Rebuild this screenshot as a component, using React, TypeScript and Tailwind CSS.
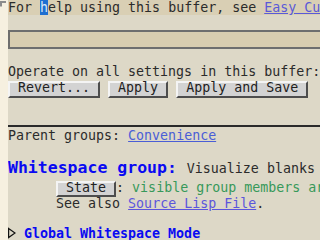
const FONT = "font-['DejaVu_Sans_Mono','Liberation_Mono',monospace]";

function Button({ label, tall = true }: { label: string; tall?: boolean }) {
  return (
    <span
      className={`inline-block bg-[#d3d3d3] border-2 border-t-[#f4f4f4] border-l-[#f4f4f4] border-r-[#4d4d4d] border-b-[#4d4d4d] text-[#222] leading-[10px] ${
        tall ? "h-[17px] mt-[2px]" : "h-[16px] mt-[2px]"
      }`}
    >
      {label}
    </span>
  );
}

export default function App() {
  return (
    <div className={`flex w-[320px] h-[240px] overflow-hidden bg-[#ddd8c7] ${FONT} text-[13.3px] text-[#2b2b2b]`}>
      {/* left fringe */}
      <div className="w-[8px] shrink-0 bg-[#f6f0e0]">
        <svg width="8" height="8" viewBox="0 0 8 8">
          <path d="M0 1 H6 V3 H2 V6.5 H0 Z" fill="#8c8c8c" />
        </svg>
      </div>

      <div className="flex-1 min-w-0 flex flex-col whitespace-pre overflow-hidden">
        {/* header line */}
        <div className="h-[15px] leading-[15px] bg-[#d9cfb4]">
          For <span className="bg-[#1f6fd1] text-[#dce8f6]">h</span>elp using this buffer, see{" "}
          <span className="text-[#5a5ad8] underline">Easy Customization</span> in the Emacs Manual.
        </div>
        <div className="h-[15px] shrink-0" />

        {/* search field */}
        <div className="h-[19px] shrink-0 bg-[#d8cdb0] border-2 border-r-0 border-[#6e6e6e]" />
        <div className="h-[15px] shrink-0" />

        <div className="h-[15px] leading-[15px] shrink-0">Operate on all settings in this buffer:</div>
        <div className="h-[20px] shrink-0 flex items-start">
          <Button label=" Revert... " />
          <span> </span>
          <Button label=" Apply " />
          <span> </span>
          <Button label=" Apply and Save " />
        </div>
        <div className="h-[26px] shrink-0" />
        <div className="h-[2px] shrink-0 bg-[#2a2a2a]" />
        <div className="h-[1px] shrink-0" />

        <div className="h-[15px] leading-[15px] shrink-0">
          Parent groups: <span className="text-[#4a5ed6] underline">Convenience</span>
        </div>
        <div className="h-[15px] shrink-0" />

        <div className="h-[20px] leading-[20px] shrink-0">
          <span className="text-[16.5px] font-bold text-[#0a0af2]">Whitespace group:</span>
          <span className="text-[16.5px]"> </span>
          Visualize blanks (TAB, (HARD) SPACE and NEWLINE).
        </div>

        <div className="h-[18px] shrink-0 flex items-baseline">
          <span>      </span>
          <Button label=" State " tall={false} />
          <span className="leading-[15px]">
            : <span className="text-[#37985a]">visible group members are all at standard values.</span>
          </span>
        </div>

        <div className="h-[15px] leading-[15px] shrink-0">
          {"      "}See also <span className="text-[#5c55dc] underline">Source Lisp File</span>.
        </div>
        <div className="h-[15px] shrink-0" />

        <div className="h-[15px] leading-[15px] shrink-0 flex items-center">
          <svg width="8" height="15" viewBox="0 0 8 15" className="shrink-0">
            <path d="M0.6 2.5 L7 7 L0.6 11.5 Z" fill="none" stroke="#111" strokeWidth="1.2" />
          </svg>
          <span> </span>
          <span className="font-bold text-[#0a0af2]">Global Whitespace Mode</span>
        </div>
      </div>
    </div>
  );
}
